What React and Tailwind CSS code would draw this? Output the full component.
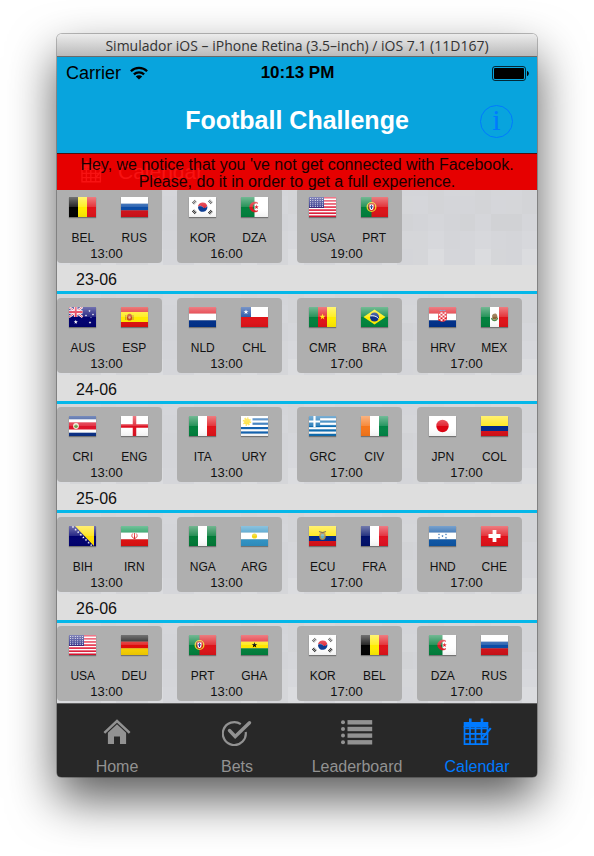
import React from "react";

/* ---------- Flags: each one is drawn on a 27 x 20 canvas ---------- */

const H = ({ c }) => c.map((f, i) => (
  <rect key={i} x="0" y={(i * 20) / c.length} width="27" height={20 / c.length + 0.1} fill={f} />
));
const V = ({ c }) => c.map((f, i) => (
  <rect key={i} x={i * 9} y="0" width="9.1" height="20" fill={f} />
));
const Star = ({ x, y, r, fill }) => {
  const pts = Array.from({ length: 10 }, (_, i) => {
    const a = (Math.PI / 5) * i - Math.PI / 2;
    const q = i % 2 ? r * 0.4 : r;
    return `${(x + q * Math.cos(a)).toFixed(2)},${(y + q * Math.sin(a)).toFixed(2)}`;
  });
  return <polygon points={pts.join(" ")} fill={fill} />;
};

const FLAGS = {
  BEL: <V c={["#000", "#ffec00", "#e01219"]} />,
  RUS: <H c={["#fff", "#0a4ba5", "#d01018"]} />,
  KOR: (
    <>
      <rect width="27" height="20" fill="#fff" />
      <path d="M9 10a4.7 4.7 0 0 1 9.2-1.2c-1 2.6-3.4 2.6-4.6 1.2S10 8.400 9 10z" fill="#dd1122" />
      <path d="M9 10c1-1.600 3.400-1.400 4.600 0s3.600 1.400 4.600-1.200A4.700 4.700 0 1 1 9 10z" fill="#0a3b93" />
      <g stroke="#222" strokeWidth="3" strokeDasharray="0.9 0.5">
        <path d="M4 6.500L7 3.500" /><path d="M20 3.500L23 6.500" />
        <path d="M4 13.500L7 16.500" /><path d="M20 16.500L23 13.500" />
      </g>
    </>
  ),
  DZA: (
    <>
      <rect width="27" height="20" fill="#fff" /><rect width="13.500" height="20" fill="#00803c" />
      <path d="M17 6.300a5 5 0 1 0 0 7.400a4 4 0 1 1 0-7.400z" fill="#dd1520" stroke="#dd1520" strokeWidth="0.600" />
      <Star x={15.5} y={10} r={2.4} fill="#dd1520" />
    </>
  ),
  USA: (
    <>
      <rect width="27" height="20" fill="#fff" />
      {[0, 1, 2, 3, 4, 5, 6].map((i) => <rect key={i} y={i * 3.08} width="27" height="1.540" fill="#e01230" />)}
      <rect width="15" height="10.800" fill="#1c2180" />
      {[1.5, 3.6, 5.7, 7.8, 9.4].map((y) => [1.5, 3.9, 6.3, 8.7, 11.1, 13.5].map((x) => (
        <circle key={`${x}${y}`} cx={x} cy={y} r="0.500" fill="#fff" />
      )))}
    </>
  ),
  PRT: (
    <>
      <rect width="27" height="20" fill="#dc1218" /><rect width="10.500" height="20" fill="#00803c" />
      <circle cx="10.500" cy="10" r="4.300" fill="none" stroke="#e9d820" strokeWidth="1.300" />
      <path d="M8 7h5v4a2.500 2.500 0 0 1-5 0z" fill="#fff" stroke="#dc1218" />
      <path d="M10.500 8v4M9 9.800h3" stroke="#14388c" strokeWidth="1" />
    </>
  ),
  AUS: (
    <>
      <rect width="27" height="20" fill="#00006f" />
      <path d="M0 0L13.500 10M13.500 0L0 10" stroke="#fff" strokeWidth="2.200" />
      <path d="M0 0L13.500 10M13.500 0L0 10" stroke="#e01230" strokeWidth="0.900" />
      <path d="M6.700 0v10M0 5h13.500" stroke="#fff" strokeWidth="3.400" />
      <path d="M6.700 0v10M0 5h13.500" stroke="#e01230" strokeWidth="2" />
      <Star x={6.8} y={15} r={2.2} fill="#fff" />
      <Star x={20.5} y={4} r={1.2} fill="#fff" /><Star x={17} y={8.5} r={1.2} fill="#fff" />
      <Star x={24} y={7.5} r={1.2} fill="#fff" /><Star x={21} y={15.500} r={1.4} fill="#fff" />
      <Star x={22} y={10.500} r={0.8} fill="#fff" />
    </>
  ),
  ESP: (
    <>
      <rect width="27" height="20" fill="#dd1010" /><rect y="5" width="27" height="10" fill="#ffea00" />
      <path d="M6 8.500c1-2.500 4-2.500 5 0v3.500c0 2-5 2-5 0z" fill="#c8481c" />
      <path d="M4.800 8v5M12 8v5" stroke="#b98a30" /><circle cx="8.500" cy="10.500" r="1.200" fill="#e8b090" />
    </>
  ),
  NLD: <H c={["#e01520", "#fff", "#00308a"]} />,
  CHL: (
    <>
      <rect width="27" height="10" fill="#fff" /><rect y="10" width="27" height="10" fill="#e01218" />
      <rect width="10" height="10" fill="#0a3f9c" /><Star x={5} y={5} r={2.6} fill="#fff" />
    </>
  ),
  CMR: <><V c={["#00803c", "#e01218", "#ffec00"]} /><Star x={13.5} y={9.800} r={3.2} fill="#ffe500" /></>,
  BRA: (
    <>
      <rect width="27" height="20" fill="#00853e" />
      <path d="M13.500 2.500L24.500 10L13.500 17.500L2.500 10z" fill="#ffec00" />
      <circle cx="13.500" cy="10" r="4.500" fill="#0c2f86" />
      <path d="M9.200 8.800c3-.600 6.500.400 8.400 2.800" stroke="#fff" strokeWidth="0.900" fill="none" />
    </>
  ),
  HRV: (
    <>
      <H c={["#e01520", "#fff", "#00308a"]} />
      <path d="M9.500 5h8v6.500c0 4-8 4-8 0z" fill="#fff" stroke="#e01520" strokeWidth="0.700" />
      {[0, 1, 2, 3, 4].map((r) => [0, 1, 2, 3].map((c) => (r + c) % 2 === 0 && (
        <rect key={`${r}${c}`} x={9.5 + c * 2} y={5 + r * 1.8} width="2" height="1.800" fill="#e01520" />
      )))}
      <path d="M10 4l1.500-1.300L13.500 3.600l2-.900L17 4z" fill="#4a78b8" />
    </>
  ),
  MEX: (
    <>
      <V c={["#00803c", "#fff", "#e01218"]} />
      <path d="M11 8.500c1-2 4-3 5-.500l.600 2.500-2 2.300-3-.300z" fill="#8a6437" />
      <path d="M10.500 11c1 3.500 5 3.500 6.200 0" stroke="#4d8a48" strokeWidth="1.100" fill="none" />
    </>
  ),
  CRI: (
    <>
      <rect width="27" height="20" fill="#fff" />
      <rect width="27" height="3.300" fill="#0a2f86" /><rect y="16.700" width="27" height="3.300" fill="#0a2f86" />
      <rect y="6.300" width="27" height="7.200" fill="#dd1228" />
      <ellipse cx="7" cy="10" rx="2.900" ry="3" fill="#f3eedc" /><circle cx="7" cy="10.300" r="1.800" fill="#6ba04d" />
    </>
  ),
  ENG: <><rect width="27" height="20" fill="#fff" /><path d="M13.500 0v20M0 10h27" stroke="#dd1020" strokeWidth="3.500" /></>,
  ITA: <V c={["#00803c", "#fff", "#e01218"]} />,
  URY: (
    <>
      <rect width="27" height="20" fill="#fff" />
      {[2.2, 6.600, 11, 15.400].map((y) => <rect key={y} y={y} width="27" height="2.200" fill="#1262b0" />)}
      <rect width="11.500" height="11" fill="#fff" />
      <circle cx="6" cy="5.500" r="3" fill="#ffdc18" />
      <circle cx="6" cy="5.500" r="3.500" fill="none" stroke="#ffdc18" strokeWidth="1.500" strokeDasharray="1.400 1.300" />
    </>
  ),
  GRC: (
    <>
      <rect width="27" height="20" fill="#fff" />
      {[0, 1, 2, 3, 4].map((i) => <rect key={i} y={i * 4.44} width="27" height="2.220" fill="#0d6cb0" />)}
      <rect width="11.100" height="11.100" fill="#0d6cb0" />
      <path d="M5.500 0v11.100M0 5.500h11.100" stroke="#fff" strokeWidth="2.200" />
    </>
  ),
  CIV: <V c={["#f5761a", "#fff", "#008445"]} />,
  JPN: <><rect width="27" height="20" fill="#fff" /><circle cx="13.500" cy="10" r="6.200" fill="#dd0010" /></>,
  COL: (
    <>
      <rect width="27" height="10" fill="#ffe600" /><rect y="10" width="27" height="5" fill="#00288a" />
      <rect y="15" width="27" height="5" fill="#d81018" />
    </>
  ),
  BIH: (
    <>
      <rect width="27" height="20" fill="#00006f" /><path d="M6 0h19v20z" fill="#ffe000" />
      {[0, 1, 2, 3, 4, 5, 6, 7].map((i) => <Star key={i} x={4 + i * 2.6} y={1 + i * 2.6} r={1.4} fill="#fff" />)}
    </>
  ),
  IRN: (
    <>
      <H c={["#009048", "#fff", "#dd1010"]} />
      <path d="M13.500 7v6M11.800 7.500c-1.800 2-.800 4.500 1.700 5M15.200 7.500c1.800 2 .800 4.500-1.700 5" stroke="#e02a2a" strokeWidth="1" fill="none" />
    </>
  ),
  NGA: <V c={["#007a36", "#fff", "#007a36"]} />,
  ARG: <><H c={["#2f92c4", "#fff", "#2f92c4"]} /><circle cx="13.500" cy="10" r="2.600" fill="#f3d618" /></>,
  ECU: (
    <>
      <rect width="27" height="10" fill="#ffe600" /><rect y="10" width="27" height="5" fill="#00288a" />
      <rect y="15" width="27" height="5" fill="#d81018" />
      <ellipse cx="13.500" cy="10" rx="3.300" ry="4" fill="#b58a3a" />
      <ellipse cx="13.500" cy="10.300" rx="1.900" ry="2.500" fill="#6cb0b8" />
      <path d="M10 5.500l3.500 1 3.500-1" stroke="#5a4526" strokeWidth="1.300" fill="none" />
    </>
  ),
  FRA: <V c={["#000f6a", "#fff", "#e01020"]} />,
  HND: (
    <>
      <H c={["#0c55a5", "#fff", "#0c55a5"]} />
      {[[10, 8.300], [17, 8.300], [13.5, 10], [10, 11.800], [17, 11.800]].map(([x, y]) => (
        <Star key={`${x}${y}`} x={x} y={y} r={1.2} fill="#0c55a5" />
      ))}
    </>
  ),
  CHE: <><rect width="27" height="20" fill="#e01018" /><path d="M13.500 4v12M7.500 10h12" stroke="#fff" strokeWidth="3.800" /></>,
  DEU: <H c={["#000", "#dd0a0a", "#f7cf00"]} />,
  GHA: <><H c={["#e01520", "#ffe600", "#00803c"]} /><Star x={13.5} y={10} r={3} fill="#000" /></>,
};

const Flag = ({ code }) => (
  <svg viewBox="0 0 27 20" className="h-5 w-[27px] shadow-[0_1px_1px_#00000059]" aria-hidden="true">
    {FLAGS[code]}
    <rect width="27" height="20" fill="url(#gloss)" />
  </svg>
);

/* ---------- Soft mosaic behind each row of matches ---------- */

const TONES = ["#d3d4d7", "#d5d6da", "#d2d3d6", "#d7d8dc", "#d4d5d9", "#d1d2d5", "#dbdcdf", "#d5d6d9", "#d3d4d8"];
const Mosaic = () => (
  <svg viewBox="0 0 480 81" preserveAspectRatio="none" aria-hidden="true" className="absolute inset-0 h-full w-full" shapeRendering="crispEdges">
    {Array.from({ length: 5 * 31 }, (_, i) => {
      const col = i % 31;
      const row = Math.floor(i / 31);
      return (
        <rect key={i} x={col * 15.6 - 3} y={row * 18 - 7} width="15.700" height="18.100"
          fill={TONES[(col * col * 7 + row * row * 5 + col * row * 3 + row * 4) % TONES.length]} />
      );
    })}
  </svg>
);

/* ---------- Schedule ---------- */

const DAYS = [
  { date: null, games: [["BEL", "RUS", "13:00"], ["KOR", "DZA", "16:00"], ["USA", "PRT", "19:00"]] },
  { date: "23-06", games: [["AUS", "ESP", "13:00"], ["NLD", "CHL", "13:00"], ["CMR", "BRA", "17:00"], ["HRV", "MEX", "17:00"]] },
  { date: "24-06", games: [["CRI", "ENG", "13:00"], ["ITA", "URY", "13:00"], ["GRC", "CIV", "17:00"], ["JPN", "COL", "17:00"]] },
  { date: "25-06", games: [["BIH", "IRN", "13:00"], ["NGA", "ARG", "13:00"], ["ECU", "FRA", "17:00"], ["HND", "CHE", "17:00"]] },
  { date: "26-06", games: [["USA", "DEU", "13:00"], ["PRT", "GHA", "13:00"], ["KOR", "BEL", "17:00"], ["DZA", "RUS", "17:00"]] },
];

const Match = ({ game: [home, away, time] }) => (
  <li className="h-[75px] rounded bg-[#afafaf] pt-[9px] text-[#111]">
    <div className="grid grid-cols-2 pr-0.5 text-xs">
      {[home, away].map((code) => (
        <div key={code} className="flex flex-col items-center gap-[13px]">
          <Flag code={code} />
          <span>{code}</span>
        </div>
      ))}
    </div>
    <p className="pr-1.5 text-center text-[13px] leading-4">{time}</p>
  </li>
);

const Day = ({ date, games }) => (
  <section className="group">
    {date && (
      <h3 className="h-[29px] border-b-[3px] border-[#04b7e9] bg-[#dedede] pl-[19px] text-base leading-[30px] text-[#111]">{date}</h3>
    )}
    <div className="relative h-20 group-even:h-[81px]">
      <Mosaic />
      <ul className="relative grid grid-cols-4 gap-x-[15px] pr-[15px] pt-[3px] group-even:pt-1">
        {games.map((g) => <Match key={g[0]} game={g} />)}
      </ul>
    </div>
  </section>
);

/* ---------- Icons ---------- */

const HomeIcon = () => (
  <svg viewBox="0 0 28 28" className="size-7" fill="currentColor" aria-hidden="true">
    <path d="M14 1.200L.500 14l1.700 1.800L14 4.800l11.800 11 1.700-1.800z" />
    <path d="M14 6.300L4.900 14.800V26H11v-7.500h6V26h6.100V14.800z" />
  </svg>
);
const BetsIcon = () => (
  <svg viewBox="0 0 30 28" className="h-7 w-[30px]" fill="none" stroke="currentColor" aria-hidden="true">
    <path d="M18.800 6.100A11.500 11.500 0 1 0 23.700 14" strokeWidth="2.200" />
    <path d="M7.500 12.500l5.700 6L27.500 4.800" strokeWidth="3.400" strokeLinecap="round" />
  </svg>
);
const ListIcon = () => (
  <svg viewBox="0 0 32 28" className="h-7 w-8" fill="currentColor" aria-hidden="true">
    {[4.3, 11, 17.6, 24.3].map((y) => (
      <g key={y}><circle cx="2" cy={y} r="2" /><rect x="6.500" y={y - 2.2} width="24.700" height="4.400" /></g>
    ))}
  </svg>
);
const CalendarIcon = ({ className = "h-7 w-[30px]" }) => (
  <svg viewBox="0 0 30 28" className={className} aria-hidden="true">
    <path d="M1.700 4h24.600v5.500H1.700z" fill="currentColor" />
    <path d="M8.300 .500v6M20 .500v6" stroke="currentColor" strokeWidth="2.600" />
    <path d="M2.500 8v18.200h23V8M8 9v17M13.500 9v17M19.500 9v17M2.500 10.500h23M2.500 15.800h23M2.500 21h23" fill="none" stroke="currentColor" strokeWidth="1.700" />
    <path d="M18.500 23l1-3.500 8.500-10 1.600 1.200-8.500 10z" fill="currentColor" />
  </svg>
);

const TABS = [
  { label: "Home", Icon: HomeIcon },
  { label: "Bets", Icon: BetsIcon },
  { label: "Leaderboard", Icon: ListIcon },
  { label: "Calendar", Icon: CalendarIcon, active: true },
];

export default function App() {
  return (
    <div className="min-h-screen bg-white px-[57px] pb-20 pt-[34px] font-['Liberation_Sans',Arial,sans-serif]">
      <svg width="0" height="0" className="absolute" aria-hidden="true">
        <linearGradient id="gloss" x1="0" y1="0" x2="0" y2="1">
          <stop offset="0" stopColor="#fff" stopOpacity="0.450" />
          <stop offset="0.500" stopColor="#fff" stopOpacity="0.150" />
          <stop offset="0.500" stopColor="#fff" stopOpacity="0" />
          <stop offset="1" stopColor="#000" stopOpacity="0.060" />
        </linearGradient>
      </svg>

      <div className="rounded-[5px] shadow-[0_0_0_1px_#00000040,0_22px_48px_#000000a6]">
        <div className="h-[23px] rounded-t-[5px] border-b border-[#6a6a6a] bg-linear-to-b from-[#ececec] to-[#bababa] text-center font-['Open_Sans',sans-serif] text-sm leading-[24px] text-[#333]">
          Simulador iOS – iPhone Retina (3.5–inch) / iOS 7.1 (11D167)
        </div>

        <header className="h-24 bg-[#08a4dd]">
          <div className="grid h-8 grid-cols-3 items-center pl-[9px] pr-2 text-lg leading-8 text-black">
            <span className="flex items-center gap-[9px]">
              Carrier
              <svg viewBox="0 0 18 14" className="h-3.5 w-[18px]" fill="none" stroke="#000" strokeWidth="2.300" aria-label="Wi-Fi">
                <path d="M.900 5.200a11.500 11.500 0 0 1 16.200 0M3.900 8.400a7.300 7.300 0 0 1 10.200 0" />
                <path d="M9 13.500L5.800 10.600a4.500 4.500 0 0 1 6.400 0z" fill="#000" stroke="none" />
              </svg>
            </span>
            <span className="text-center text-[17px] font-bold">10:13 PM</span>
            <svg viewBox="0 0 37 15" className="h-[15px] w-[37px] justify-self-end" aria-label="Battery full">
              <rect x="0.500" y="0.500" width="33" height="14" rx="2.500" fill="none" stroke="#000" strokeOpacity="0.750" />
              <rect x="2" y="2" width="30" height="11" rx="1" />
              <path d="M35 5c2.400.500 2.400 4.500 0 5z" />
            </svg>
          </div>
          <div className="grid h-16 grid-cols-[1fr_auto_1fr] items-center pr-6">
            <h1 className="col-start-2 pl-6 text-[25px] font-bold text-white">Football Challenge</h1>
            <button type="button" aria-label="Information" className="flex size-[33px] items-center justify-center justify-self-end rounded-full border border-[#007aff] pb-0.5 font-['Liberation_Serif',serif] text-[30px] leading-none text-[#007aff]">
              i
            </button>
          </div>
        </header>

        <main className="relative">
          <div className="flex h-[37px] items-center gap-3.5 bg-black pl-[23px] text-[#bbb]">
            <CalendarIcon className="h-6 w-6" />
            <h2 className="text-[21px]">Calendar</h2>
          </div>
          <p role="alert" className="absolute inset-x-0 top-0 h-[37px] border-t border-[#4a1010] bg-[#ff0000e6] pt-0.5 text-center text-base leading-[17px] text-[#1a0000]">
            Hey, we notice that you 've not get connected with Facebook.<br />
            Please, do it in order to get a full experience.
          </p>
          <div className="overflow-hidden">
            <div className="-mt-[5px]">
              {DAYS.map((d) => <Day key={d.date ?? "previous"} {...d} />)}
            </div>
          </div>
        </main>

        <nav className="grid grid-cols-4 rounded-b border-t border-[#606060] bg-[#282828] pt-3.5">
          {TABS.map(({ label, Icon, active }) => (
            <button key={label} type="button" aria-current={active ? "page" : undefined}
              className={active ? "flex flex-col items-center gap-[11px] text-[#007aff]" : "flex flex-col items-center gap-[11px] text-[#929292]"}>
              <Icon />
              <span className="text-base leading-5">{label}</span>
            </button>
          ))}
        </nav>
      </div>
    </div>
  );
}
